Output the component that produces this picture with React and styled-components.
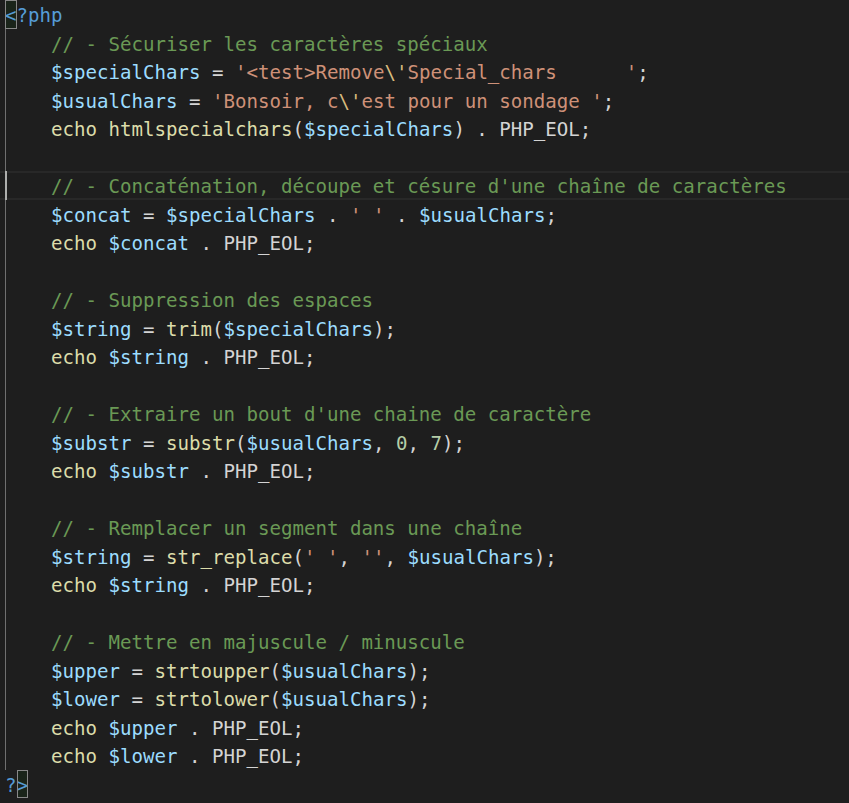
import React from "react";
import styled, { createGlobalStyle } from "styled-components";

const Global = createGlobalStyle`
  html, body { margin: 0; padding: 0; background: #1e1e1e; }
  #root { width: 849px; height: 803px; overflow: hidden; }
`;

const COLORS = {
  tag: "#569cd6",
  cmt: "#6a9955",
  var: "#9cdcfe",
  str: "#ce9178",
  esc: "#d7ba7d",
  fn: "#dcdcaa",
  num: "#b5cea8",
  op: "#d4d4d4",
};

const Editor = styled.div`
  width: 849px;
  height: 803px;
  background: #1e1e1e;
  font-family: "DejaVu Sans Mono", "Liberation Mono", monospace;
  font-size: 19.1px;
  color: #d4d4d4;
  box-sizing: border-box;
  overflow: hidden;
`;

const Block = styled.div`
  box-shadow: inset 1px 0 0 #707070;
  margin-left: 5px;
`;

const Line = styled.div`
  position: relative;
  height: 28.5px;
  line-height: 32.5px;
  white-space: pre;
  padding-left: ${(p) => (p.$inBlock ? 0 : 5)}px;
  ${(p) =>
    p.$current &&
    `
    margin-left: -5px;
    padding-left: 5px;
    box-shadow: inset 0 2px 0 #282828, inset 0 -2px 0 #282828;
  `}
`;

const Indent = styled.span`
  display: inline-block;
  width: ${(p) => p.$cols * 11.5}px;
`;

const Tok = styled.span`
  color: ${(p) => COLORS[p.$kind] || "#d4d4d4"};
`;

const Match = styled.span`
  color: ${COLORS.tag};
  display: inline-block;
  vertical-align: top;
  height: 28.5px;
  outline: 1px solid #888888;
  outline-offset: -1px;
  background: rgba(0, 100, 0, 0.1);
`;

const Cursor = styled.span`
  position: absolute;
  left: 5px;
  top: 0;
  width: 2px;
  height: 28.5px;
  background: #aeafad;
`;

const V = (t) => ["var", t];
const O = (t) => ["op", t];
const S = (t) => ["str", t];
const F = (t) => ["fn", t];
const C = (t) => ["cmt", t];
const N = (t) => ["num", t];
const E = (t) => ["esc", t];

const body = [
  [C("// - Sécuriser les caractères spéciaux")],
  [V("$specialChars"), O(" = "), S("'<test>Remove"), E("\\'"), S("Special_chars      '"), O(";")],
  [V("$usualChars"), O(" = "), S("'Bonsoir, c"), E("\\'"), S("est pour un sondage '"), O(";")],
  [F("echo"), O(" "), F("htmlspecialchars"), O("("), V("$specialChars"), O(") . PHP_EOL;")],
  [],
  [C("// - Concaténation, découpe et césure d'une chaîne de caractères")],
  [V("$concat"), O(" = "), V("$specialChars"), O(" . "), S("' '"), O(" . "), V("$usualChars"), O(";")],
  [F("echo"), O(" "), V("$concat"), O(" . PHP_EOL;")],
  [],
  [C("// - Suppression des espaces")],
  [V("$string"), O(" = "), F("trim"), O("("), V("$specialChars"), O(");")],
  [F("echo"), O(" "), V("$string"), O(" . PHP_EOL;")],
  [],
  [C("// - Extraire un bout d'une chaine de caractère")],
  [V("$substr"), O(" = "), F("substr"), O("("), V("$usualChars"), O(", "), N("0"), O(", "), N("7"), O(");")],
  [F("echo"), O(" "), V("$substr"), O(" . PHP_EOL;")],
  [],
  [C("// - Remplacer un segment dans une chaîne")],
  [V("$string"), O(" = "), F("str_replace"), O("("), S("' '"), O(", "), S("''"), O(", "), V("$usualChars"), O(");")],
  [F("echo"), O(" "), V("$string"), O(" . PHP_EOL;")],
  [],
  [C("// - Mettre en majuscule / minuscule")],
  [V("$upper"), O(" = "), F("strtoupper"), O("("), V("$usualChars"), O(");")],
  [V("$lower"), O(" = "), F("strtolower"), O("("), V("$usualChars"), O(");")],
  [F("echo"), O(" "), V("$upper"), O(" . PHP_EOL;")],
  [F("echo"), O(" "), V("$lower"), O(" . PHP_EOL;")],
];

export default function App() {
  return (
    <>
      <Global />
      <Editor>
        <Line>
          <Match>&lt;</Match>
          <Tok $kind="tag">?php</Tok>
        </Line>
        <Block>
          {body.map((toks, i) => (
            <Line key={i} $inBlock $current={i === 5}>
              {i === 5 && <Cursor />}
              {toks.length > 0 && <Indent $cols={4} />}
              {toks.map(([k, t], j) => (
                <Tok key={j} $kind={k}>
                  {t}
                </Tok>
              ))}
            </Line>
          ))}
        </Block>
        <Line>
          <Tok $kind="tag">?</Tok>
          <Match>&gt;</Match>
        </Line>
      </Editor>
    </>
  );
}
